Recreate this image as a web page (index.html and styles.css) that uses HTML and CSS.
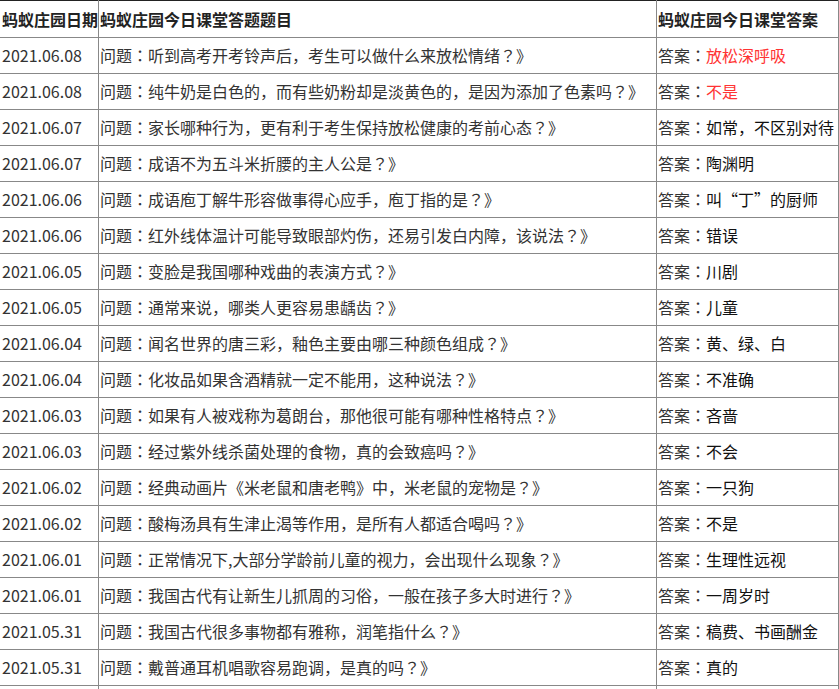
FILE: index.html
```html
<!DOCTYPE html>
<html lang="zh-CN">
<head>
<meta charset="utf-8">
<title>蚂蚁庄园今日课堂答案</title>
<link rel="stylesheet" href="styles.css">
</head>
<body>
<table class="qa">
<colgroup><col class="c-date"><col class="c-q"><col class="c-a"></colgroup>
<thead>
<tr><th>蚂蚁庄园日期</th><th>蚂蚁庄园今日课堂答题题目</th><th>蚂蚁庄园今日课堂答案</th></tr>
</thead>
<tbody>
<tr><td>2021.06.08</td><td>问题<span class="p" lang="ja">：</span>听到高考开考铃声后，考生可以做什么来放松情绪<span class="p" lang="ja">？</span>》</td><td>答案<span class="p" lang="ja">：</span><span class="ans red">放松深呼吸</span></td></tr>
<tr><td>2021.06.08</td><td>问题<span class="p" lang="ja">：</span>纯牛奶是白色的，而有些奶粉却是淡黄色的，是因为添加了色素吗<span class="p" lang="ja">？</span>》</td><td>答案<span class="p" lang="ja">：</span><span class="ans red">不是</span></td></tr>
<tr><td>2021.06.07</td><td>问题<span class="p" lang="ja">：</span>家长哪种行为，更有利于考生保持放松健康的考前心态<span class="p" lang="ja">？</span>》</td><td>答案<span class="p" lang="ja">：</span><span class="ans">如常，不区别对待</span></td></tr>
<tr><td>2021.06.07</td><td>问题<span class="p" lang="ja">：</span>成语不为五斗米折腰的主人公是<span class="p" lang="ja">？</span>》</td><td>答案<span class="p" lang="ja">：</span><span class="ans">陶渊明</span></td></tr>
<tr><td>2021.06.06</td><td>问题<span class="p" lang="ja">：</span>成语庖丁解牛形容做事得心应手，庖丁指的是<span class="p" lang="ja">？</span>》</td><td>答案<span class="p" lang="ja">：</span><span class="ans">叫“丁”的厨师</span></td></tr>
<tr><td>2021.06.06</td><td>问题<span class="p" lang="ja">：</span>红外线体温计可能导致眼部灼伤，还易引发白内障，该说法<span class="p" lang="ja">？</span>》</td><td>答案<span class="p" lang="ja">：</span><span class="ans">错误</span></td></tr>
<tr><td>2021.06.05</td><td>问题<span class="p" lang="ja">：</span>变脸是我国哪种戏曲的表演方式<span class="p" lang="ja">？</span>》</td><td>答案<span class="p" lang="ja">：</span><span class="ans">川剧</span></td></tr>
<tr><td>2021.06.05</td><td>问题<span class="p" lang="ja">：</span>通常来说，哪类人更容易患龋齿<span class="p" lang="ja">？</span>》</td><td>答案<span class="p" lang="ja">：</span><span class="ans">儿童</span></td></tr>
<tr><td>2021.06.04</td><td>问题<span class="p" lang="ja">：</span>闻名世界的唐三彩，釉色主要由哪三种颜色组成<span class="p" lang="ja">？</span>》</td><td>答案<span class="p" lang="ja">：</span><span class="ans">黄、绿、白</span></td></tr>
<tr><td>2021.06.04</td><td>问题<span class="p" lang="ja">：</span>化妆品如果含酒精就一定不能用，这种说法<span class="p" lang="ja">？</span>》</td><td>答案<span class="p" lang="ja">：</span><span class="ans">不准确</span></td></tr>
<tr><td>2021.06.03</td><td>问题<span class="p" lang="ja">：</span>如果有人被戏称为葛朗台，那他很可能有哪种性格特点<span class="p" lang="ja">？</span>》</td><td>答案<span class="p" lang="ja">：</span><span class="ans">吝啬</span></td></tr>
<tr><td>2021.06.03</td><td>问题<span class="p" lang="ja">：</span>经过紫外线杀菌处理的食物，真的会致癌吗<span class="p" lang="ja">？</span>》</td><td>答案<span class="p" lang="ja">：</span><span class="ans">不会</span></td></tr>
<tr><td>2021.06.02</td><td>问题<span class="p" lang="ja">：</span>经典动画片《米老鼠和唐老鸭》中，米老鼠的宠物是<span class="p" lang="ja">？</span>》</td><td>答案<span class="p" lang="ja">：</span><span class="ans">一只狗</span></td></tr>
<tr><td>2021.06.02</td><td>问题<span class="p" lang="ja">：</span>酸梅汤具有生津止渴等作用，是所有人都适合喝吗<span class="p" lang="ja">？</span>》</td><td>答案<span class="p" lang="ja">：</span><span class="ans">不是</span></td></tr>
<tr><td>2021.06.01</td><td>问题<span class="p" lang="ja">：</span>正常情况下,大部分学龄前儿童的视力，会出现什么现象<span class="p" lang="ja">？</span>》</td><td>答案<span class="p" lang="ja">：</span><span class="ans">生理性远视</span></td></tr>
<tr><td>2021.06.01</td><td>问题<span class="p" lang="ja">：</span>我国古代有让新生儿抓周的习俗，一般在孩子多大时进行<span class="p" lang="ja">？</span>》</td><td>答案<span class="p" lang="ja">：</span><span class="ans">一周岁时</span></td></tr>
<tr><td>2021.05.31</td><td>问题<span class="p" lang="ja">：</span>我国古代很多事物都有雅称，润笔指什么<span class="p" lang="ja">？</span>》</td><td>答案<span class="p" lang="ja">：</span><span class="ans">稿费、书画酬金</span></td></tr>
<tr><td>2021.05.31</td><td>问题<span class="p" lang="ja">：</span>戴普通耳机唱歌容易跑调，是真的吗<span class="p" lang="ja">？</span>》</td><td>答案<span class="p" lang="ja">：</span><span class="ans">真的</span></td></tr>
<tr class="empty"><td></td><td></td><td></td></tr>
</tbody>
</table>
</body>
</html>
```
FILE: styles.css
```css
html, body {
  margin: 0;
  padding: 0;
  background: #fff;
  overflow: hidden;
}
body {
  font-family: "Noto Sans CJK SC", "Noto Sans", sans-serif;
  font-size: 16px;
  color: #333;
}
.qa {
  border-collapse: collapse;
  table-layout: fixed;
  width: 839px;
  margin-left: -1px;
  border-top: 1px solid #222;
}
.c-date { width: 99px; }
.c-q { width: 558px; }
.c-a { width: 182px; }
.qa th, .qa td {
  border: 1px solid #888;
  padding: 7px 0 8px 1px;
  text-align: left;
  white-space: nowrap;
  overflow: hidden;
  line-height: 20px;
}
.qa thead th {
  border-top: 1px solid #222;
  padding: 8px 0 8px 1px;
  font-weight: bold;
  color: #222;
}
.qa td:first-child, .qa th:first-child {
  padding-left: 2px;
}
.qa tr.empty td {
  height: 20px;
}
.p {
  font-family: "Noto Sans CJK JP", "Noto Sans CJK SC", sans-serif;
}
.ans { color: #111; }
.ans.red { color: #f33; }
```
